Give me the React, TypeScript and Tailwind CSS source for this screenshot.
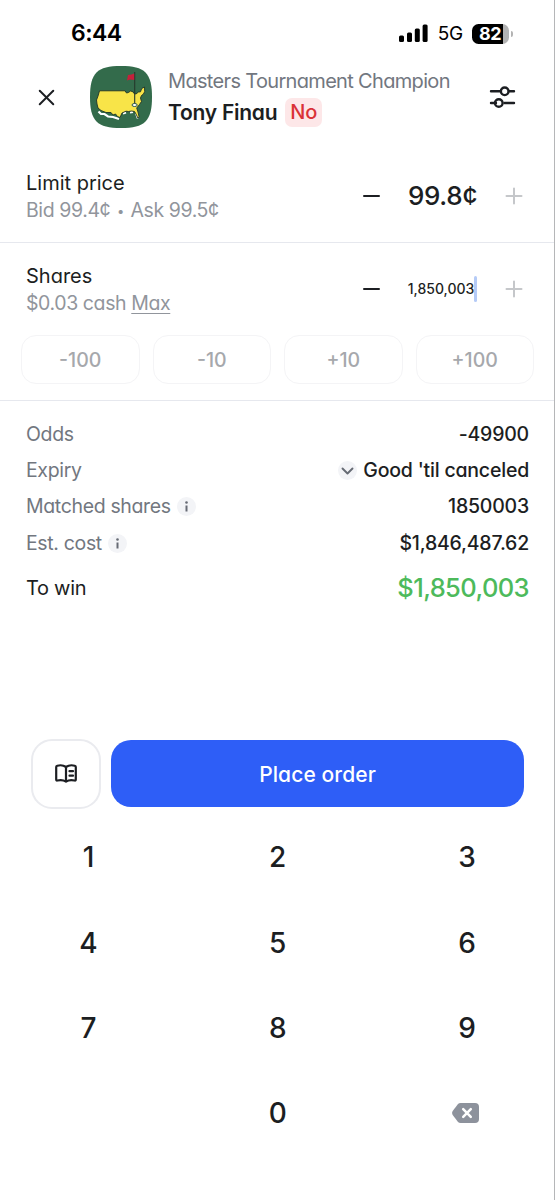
import React from 'react';
import { X } from 'lucide-react';

interface StepperProps {
    label: string;
    hint: React.ReactNode;
    children: React.ReactNode;
}

interface SummaryRowProps {
    label: string;
    value: string;
    info?: boolean;
    dropdown?: boolean;
}

const QUICK_AMOUNTS = ['-100', '-10', '+10', '+100'];

const SUMMARY: SummaryRowProps[] = [
    { label: 'Odds', value: '-49900' },
    { label: 'Expiry', value: "Good 'til canceled", dropdown: true },
    { label: 'Matched shares', value: '1850003', info: true },
    { label: 'Est. cost', value: '$1,846,487.62', info: true },
];

const KEYS = ['1', '2', '3', '4', '5', '6', '7', '8', '9', '', '0', 'delete'];

const StatusBar = () => (
    <div className="flex h-[66px] shrink-0 items-center justify-between pl-[71px] pr-[41px] pt-px">
        <span className="text-[23px] font-semibold leading-none tracking-[-0.5px] text-black">6:44</span>
        <div className="flex items-center">
            <svg width="29" height="19" viewBox="0 0 29 19" fill="#000">
                <rect x="0" y="11.5" width="5" height="6.5" rx="1.5" />
                <rect x="8" y="8.5" width="5" height="9.5" rx="1.5" />
                <rect x="15.8" y="4.5" width="5" height="13.5" rx="1.5" />
                <rect x="23.6" y="0.5" width="5" height="17.5" rx="1.5" />
            </svg>
            <span className="ml-[10px] text-[19px] leading-none tracking-[-0.3px] text-black">5G</span>
            <div className="ml-[9px] flex h-[20px] w-[37px] items-center justify-center overflow-hidden rounded-[6.5px] bg-[linear-gradient(90deg,#000_84%,#b3b3b3_84%)] pr-px">
                <span className="text-[18px] font-bold leading-none tracking-[-0.6px] text-white">82</span>
            </div>
            <div className="ml-[1.5px] h-[6px] w-[2.5px] rounded-r-full bg-[#b3b3b3]" />
        </div>
    </div>
);

const MastersLogo = () => (
    <svg className="shrink-0" width="62" height="62" viewBox="0 0 62 62">
        <path d="M0 31C0 7 7 0 31 0s31 7 31 31-7 31-31 31S0 55 0 31Z" fill="#336b4b" />
        <path
            d="M8.500 45.500L11 48H14.500L18 50.500L23 51L29 53M33 47.500L36 46.500M40 46.500L43 46M46 47L48 52.500"
            fill="none"
            stroke="#fff"
            strokeWidth="2.200"
        />
        <path
            d="M9.500 24.800H35L36.500 27L38.500 26.500L40.500 25L43 25.800L44 27.500L46 28L48.500 26L50.500 25.800L51.700 22.500L54.500 21L54.700 25.500L53.500 28L51.500 29.500L50.500 32L51.500 35.500L49.500 38.500L46.700 42L48 46L49 50.500L48 52.300L46 48L44.500 45.500L41.500 45L38.500 45.500L36 45.200L32 47L30 51.500L27.500 50.500L25.500 48L23 49L21 46.500L16 46.500L11 44.500L8 42L7 38L6.500 34L8 30Z"
            fill="#f8e448"
            stroke="#1f3327"
            strokeWidth="0.9"
            strokeLinejoin="round"
        />
        <path d="M44.700 6v32" stroke="#26382c" strokeWidth="1.100" />
        <path d="M44.200 7.500L41.500 8.500L38 9L37 14.500L40 13.500L44.200 14Z" fill="#c4213b" />
        <ellipse cx="44.600" cy="39" rx="2.600" ry="1.500" fill="#fff" stroke="#26554b" strokeWidth="1" />
    </svg>
);

const Header = () => (
    <header className="flex h-[62px] shrink-0 items-center pl-[33px] pr-[38px]">
        <X className="shrink-0 text-[#1c1e22]" size={27} strokeWidth={2} absoluteStrokeWidth />
        <div className="ml-[30px] flex items-center gap-4">
            <MastersLogo />
            <div className="flex flex-col whitespace-nowrap">
                <span className="pb-0.5 text-[20px] leading-[29px] tracking-[-0.67px] text-[#72777f]">Masters Tournament Champion</span>
                <div className="flex items-center gap-2">
                    <span className="text-[21px] font-semibold leading-[30px] tracking-[-0.25px] text-[#1c1e22]">Tony Finau</span>
                    <span className="rounded-[7px] bg-[#fde7e8] px-[5px] text-[20px] font-medium leading-[29px] tracking-[-0.3px] text-[#da3237]">No</span>
                </div>
            </div>
        </div>
        <svg className="ml-auto shrink-0" width="27" height="24" viewBox="0 0 27 24" fill="none" stroke="#1c1e22" strokeWidth="2.400" strokeLinecap="round">
            <path d="M2 6.300h9.500M20 6.300h5M2 18h5M15.500 18h9.500" />
            <circle cx="15.700" cy="6.300" r="3.800" />
            <circle cx="9.800" cy="18" r="3.800" />
        </svg>
    </header>
);

const Stepper: React.FC<StepperProps> = ({ label, hint, children }) => (
    <div className="flex items-center justify-between pl-[26px] pr-[31px]">
        <div className="whitespace-nowrap">
            <p className="text-[20px] leading-[27px] text-[#1c1e22]">{label}</p>
            <p className="text-[19.500px] leading-[27px] tracking-[-0.4px] text-[#91959c]">{hint}</p>
        </div>
        <div className="flex items-center pb-0.5">
            <button className="h-[2px] w-[17px] rounded-full bg-[#1c1e22]" aria-label={`Decrease ${label}`} />
            <div className="flex w-[125px] items-center justify-center text-[#1c1e22]">{children}</div>
            <button aria-label={`Increase ${label}`}>
                <svg width="18" height="18" viewBox="0 0 18 18" stroke="#c5c7ca" strokeWidth="2" strokeLinecap="round">
                    <path d="M1.500 9h15M9 1.500v15" />
                </svg>
            </button>
        </div>
    </div>
);

const SummaryRow: React.FC<SummaryRowProps> = ({ label, value, info, dropdown }) => (
    <div className="flex h-[36.400px] items-center justify-between whitespace-nowrap">
        <div className="flex items-center gap-1.5 text-[19.500px] tracking-[-0.35px] text-[#72777f]">
            <span>{label}</span>
            {info && (
                <svg width="19" height="19" viewBox="0 0 19 19">
                    <circle cx="9.500" cy="9.500" r="9.500" fill="#f3f4f7" />
                    <circle cx="9.500" cy="5.500" r="1.300" fill="#666b74" />
                    <path d="M9.500 8.500v6" stroke="#666b74" strokeWidth="2" />
                </svg>
            )}
        </div>
        <div className="flex items-center gap-1.5 text-[19.500px] font-medium tracking-[-0.2px] text-[#1c1e22]">
            {dropdown && (
                <svg width="19" height="19" viewBox="0 0 19 19" fill="none">
                    <circle cx="9.500" cy="9.500" r="9.500" fill="#f3f4f7" />
                    <path d="M4.500 7.500l5 5 5-5" stroke="#666b74" strokeWidth="1.900" strokeLinecap="round" strokeLinejoin="round" />
                </svg>
            )}
            <span>{value}</span>
        </div>
    </div>
);

const BookIcon = () => (
    <svg width="24" height="22" viewBox="0 0 24 22" fill="none" stroke="#1c1e22" strokeWidth="2.200" strokeLinecap="round" strokeLinejoin="round">
        <path d="M12 4C9.500 2.200 6 2 3.300 2.700Q2.200 3 2.200 4V16.500Q2.200 17.800 3.400 17.500C6 16.900 9.500 17 12 18.600C14.500 17 18 16.900 20.600 17.500Q21.800 17.800 21.800 16.500V4Q21.800 3 20.700 2.700C18 2 14.500 2.200 12 4ZM12 4V18.500M15.500 8.200H19M15.500 12.700H19" />
    </svg>
);

const Keypad = () => (
    <div className="grid grid-cols-[80px_80px_80px] justify-between pl-[48.500px] pr-[47px]">
        {KEYS.map((key, i) => (
            <button key={i} className="flex h-[85.400px] items-center justify-center text-[28px] font-medium leading-none text-[#1c1e22]">
                {key === 'delete' ? (
                    <svg className="mr-[4px]" width="27" height="20" viewBox="0 0 27 20">
                        <path d="M8.500 0H23q4 0 4 4v12q0 4-4 4H8.500Q7 20 6 19L.7 12Q-.5 10 .7 8L6 1Q7 0 8.500 0Z" fill="#8d929c" />
                        <path d="M11.200 6.200l7.600 7.600M18.800 6.200l-7.600 7.600" stroke="#fff" strokeWidth="2.500" strokeLinecap="round" />
                    </svg>
                ) : (
                    key
                )}
            </button>
        ))}
    </div>
);

export default function App() {
    return (
        <div className="flex h-[1200px] w-[555px] flex-col overflow-hidden border-r border-[#b5b6b8] bg-white font-['Inter',sans-serif] [font-feature-settings:'cv11']">
            <StatusBar />
            <Header />

            <section className="h-[115px] shrink-0 border-b border-[#e6e8ee] pt-[41.500px]">
                <Stepper
                    label="Limit price"
                    hint={<>Bid 99.4¢ <span className="mx-[1.500px] inline-block align-middle text-[13px] leading-none">•</span> Ask 99.5¢</>}
                >
                    <span className="text-[26px] font-medium leading-none tracking-[-0.3px]">99.8¢</span>
                </Stepper>
            </section>

            <section className="h-[158px] shrink-0 border-b border-[#e6e8ee] pt-5">
                <Stepper label="Shares" hint={<>$0.03 cash <span className="underline underline-offset-[3px]">Max</span></>}>
                    <span className="text-[14px] font-medium leading-none">1,850,003</span>
                    <span className="h-[26px] w-[3px] rounded-full bg-[#b5cbf7]" />
                </Stepper>
                <div className="mt-[18px] grid grid-cols-4 gap-[13px] pl-[21px] pr-5">
                    {QUICK_AMOUNTS.map((amount) => (
                        <button key={amount} className="h-[49px] rounded-[15px] border-[1.500px] border-[#f4f4f6] pt-0.5 text-[19.500px] font-medium text-[#a6a8ac]">
                            {amount}
                        </button>
                    ))}
                </div>
            </section>

            <section className="shrink-0 pl-[26px] pr-[25px] pt-[15px]">
                {SUMMARY.map((row) => (
                    <SummaryRow key={row.label} {...row} />
                ))}
                <div className="flex h-[54px] items-center justify-between pb-px">
                    <span className="text-[20px] tracking-[-0.3px] text-[#1c1e22]">To win</span>
                    <span className="text-[25.500px] font-medium tracking-[-0.6px] text-[#4dba5b]">$1,850,003</span>
                </div>
            </section>

            <div className="mt-[123px] flex shrink-0 items-center gap-[10px] pl-[31px] pr-[30px]">
                <button className="flex h-[70px] w-[70px] shrink-0 items-center justify-center rounded-[21px] border-2 border-[#eaebef]">
                    <BookIcon />
                </button>
                <button className="h-[67px] flex-1 rounded-[20px] bg-[#2e5ef7] pt-0.5 text-[21px] font-medium tracking-[0.1px] text-white">Place order</button>
            </div>

            <div className="mt-[6px] shrink-0">
                <Keypad />
            </div>
        </div>
    );
}
